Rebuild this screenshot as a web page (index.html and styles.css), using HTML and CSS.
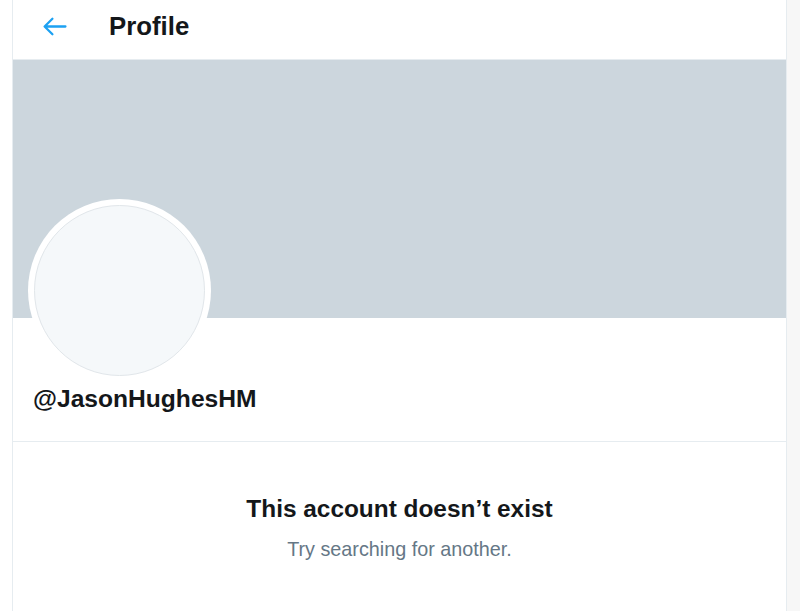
FILE: index.html
```html
<!DOCTYPE html>
<html>
<head>
<meta charset="utf-8">
<link rel="stylesheet" href="styles.css">
</head>
<body>
<div class="page">
  <main class="column">
    <header class="topbar">
      <div class="back">
        <svg width="24" height="24" viewBox="0 0 24 24"><path d="M22.5 12H3 M10 4.5L2.5 12l7.5 7.5" fill="none" stroke="#1da1f2" stroke-width="2.2" stroke-linecap="round" stroke-linejoin="round"/></svg>
      </div>
      <h1 class="title">Profile</h1>
    </header>
    <div class="banner"></div>
    <div class="info">
      <div class="avatar"><div class="avatar-inner"></div></div>
      <div class="handle">@JasonHughesHM</div>
    </div>
    <section class="empty">
      <div class="empty-title">This account doesn’t exist</div>
      <div class="empty-sub">Try searching for another.</div>
    </section>
  </main>
  <div class="side"></div>
</div>
</body>
</html>
```

FILE: styles.css
```css
html, body { margin: 0; padding: 0; background: #fff; }
body { font-family: "Liberation Sans", Arial, sans-serif; color: #14171a; overflow: hidden; }
.page { display: flex; height: 611px; padding-left: 12px; }
.column {
  width: 773px;
  border-left: 1px solid #e6ecf0;
  border-right: 1px solid #e6ecf0;
  flex: none;
}
.side { flex: 1; background: #f7f7f7; }
.topbar {
  height: 59px;
  border-bottom: 1px solid #e6ecf0;
  display: flex;
  align-items: center;
}
.back { width: 53px; padding-left: 29px; display: flex; align-items: center; height: 100%; margin-top: -6px; }
.back svg { width: 25px; height: 25px; }
.title { margin: 0 0 0 14px; font-size: 25.8px; font-weight: 700; margin-top: -6px; letter-spacing: 0; }
.banner { height: 258px; background: #ccd6dd; }
.info { position: relative; height: 123px; border-bottom: 1px solid #e6ecf0; }
.avatar {
  position: absolute;
  left: 15px;
  top: -119px;
  width: 183px;
  height: 183px;
  border-radius: 50%;
  background: #fff;
  display: flex;
  align-items: center;
  justify-content: center;
}
.avatar-inner {
  width: 171px;
  height: 171px;
  box-sizing: border-box;
  border-radius: 50%;
  background: #f5f8fa;
  border: 1px solid #e1e6ea;
}
.handle {
  position: absolute;
  left: 20px;
  top: 67px;
  font-size: 24.6px;
  font-weight: 700;
}
.empty { display: flex; flex-direction: column; align-items: center; padding-top: 51px; }
.empty-title { font-size: 24.4px; font-weight: 700; line-height: 32px; }
.empty-sub { font-size: 19.8px; color: #657786; margin-top: 12px; line-height: 24px; }
```
